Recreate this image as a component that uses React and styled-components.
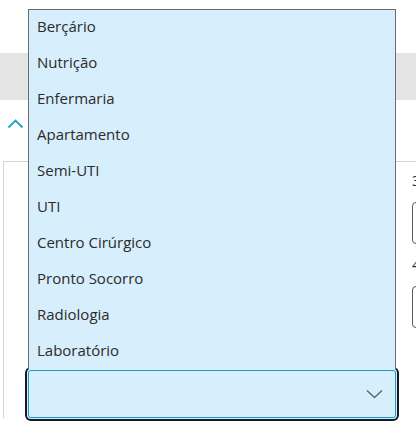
import React from "react";
import styled, { createGlobalStyle } from "styled-components";

const GlobalStyle = createGlobalStyle`
  body {
    margin: 0;
    background: #ffffff;
    overflow: hidden;
    font-family: "Open Sans", "Liberation Sans", sans-serif;
    color: #2b2b2b;
  }
`;

const Page = styled.div`
  width: 416px;
  height: 426px;
  overflow: hidden;
`;

const TopSpace = styled.div`
  height: 53px;
`;

const GrayBand = styled.div`
  height: 47px;
  background: #e4e4e4;
`;

const ToggleRow = styled.div`
  height: 61px;
  padding: 18px 0 0 7px;
  box-sizing: border-box;

  svg {
    display: block;
  }
`;

const Card = styled.div`
  margin-left: 3px;
  border-top: 1px solid #d4d4d4;
  border-left: 1px solid #d4d4d4;
  display: grid;
  grid-template-columns: 368px 200px;
  column-gap: 16px;
  padding-left: 24px;
`;

const LeftCol = styled.div`
  padding-top: 208px;
`;

const RightCol = styled.div`
  padding-top: 8px;
  display: flex;
  flex-direction: column;
`;

const Label = styled.div`
  font-size: 15px;
  line-height: 20px;
  margin-top: ${({ $first }) => ($first ? "0" : "10px")};
  margin-bottom: 12px;
`;

const Input = styled.div`
  height: 42px;
  box-sizing: border-box;
  border: 1px solid #5a5a5a;
  border-radius: 4px;
`;

const SelectWrap = styled.div`
  position: relative;
`;

const Select = styled.div`
  height: 48px;
  box-sizing: border-box;
  background: #d7eefc;
  border: 1px solid #1a9cc2;
  border-radius: 3px;
  box-shadow: 0 0 0 1px #d7eefc, 0 0 0 3px #0f1b26;
  display: flex;
  align-items: center;
  justify-content: flex-end;
  padding-right: 12px;
`;

const Menu = styled.ul`
  position: absolute;
  left: 0;
  right: 0;
  bottom: 100%;
  margin: 0;
  padding: 0;
  list-style: none;
  background: #d7eefc;
  border: 1px solid #6c6c6c;
  border-bottom: none;
  z-index: 10;
`;

const MenuItem = styled.li`
  height: 36px;
  line-height: 33px;
  padding-left: 8px;
  font-size: 15px;
  color: #2b2b2b;
`;

const sectors = [
  "Berçário",
  "Nutrição",
  "Enfermaria",
  "Apartamento",
  "Semi-UTI",
  "UTI",
  "Centro Cirúrgico",
  "Pronto Socorro",
  "Radiologia",
  "Laboratório",
];

const ChevronUp = () => (
  <svg width="17" height="11" viewBox="0 0 17 11" fill="none">
    <path d="M1.5 9.5L8.5 2.5L15.5 9.5" stroke="#1fa2c8" strokeWidth="1.8" />
  </svg>
);

const ChevronDown = () => (
  <svg width="17" height="10" viewBox="0 0 17 10" fill="none">
    <path d="M1 1.5L8.5 8.5L16 1.5" stroke="#5f6b73" strokeWidth="1.6" />
  </svg>
);

export default function App() {
  return (
    <Page>
      <GlobalStyle />
      <TopSpace />
      <GrayBand />
      <ToggleRow>
        <ChevronUp />
      </ToggleRow>
      <Card>
        <LeftCol>
          <SelectWrap>
            <Menu>
              {sectors.map((s) => (
                <MenuItem key={s}>{s}</MenuItem>
              ))}
            </Menu>
            <Select>
              <ChevronDown />
            </Select>
          </SelectWrap>
        </LeftCol>
        <RightCol>
          <Label $first>3</Label>
          <Input />
          <Label>4</Label>
          <Input />
        </RightCol>
      </Card>
    </Page>
  );
}
